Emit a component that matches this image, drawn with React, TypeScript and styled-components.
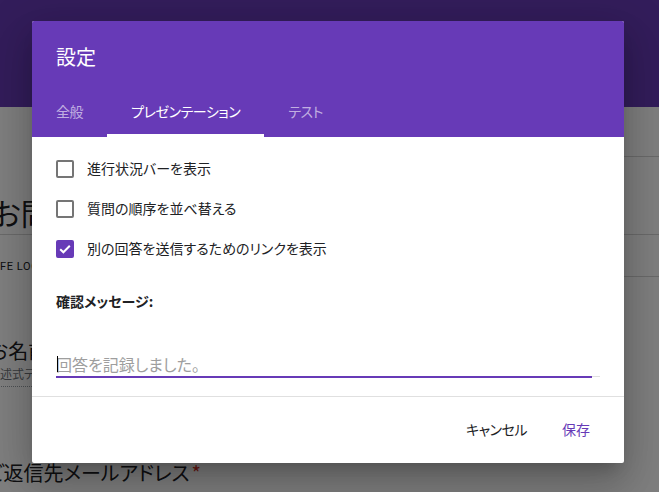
import React from "react";
import styled, { createGlobalStyle } from "styled-components";

const GlobalStyle = createGlobalStyle`
  html, body {
    margin: 0;
    padding: 0;
  }
  body {
    width: 659px;
    height: 492px;
    overflow: hidden;
    background: #ffffff;
    font-family: "Noto Sans CJK JP", "Noto Sans", sans-serif;
    font-feature-settings: "palt";
  }
`;

const Page = styled.div`
  position: relative;
  width: 659px;
  height: 492px;
  overflow: hidden;
  background: #ffffff;
`;

const TopBand = styled.div`
  height: 107px;
  background: #673ab7;
`;

const Body = styled.div`
  display: flex;
  flex-direction: column;
  color: #202124;
  white-space: nowrap;
`;

const BodyRow = styled.div`
  display: flex;
`;

// only the strip left of the dialog is ever visible
const FormCol = styled.div`
  width: 40px;
  overflow: hidden;
`;

const Spacer = styled.div`
  flex: 1;
`;

const FormTitle = styled.div`
  margin: 87px 0 0 -8px;
  padding-bottom: 4px;
  font-size: 30px;
  line-height: 36px;
  border-bottom: 1px solid #d4d4d4;
`;

const FormMeta = styled.div`
  margin-top: 24px;
  font-family: Roboto, "Liberation Sans", sans-serif;
  font-size: 11px;
  line-height: 16px;
  letter-spacing: 0.6px;
`;

const QuestionTitle = styled.div<{ $shift: number; $gap: number }>`
  margin: ${({ $gap }) => $gap}px 0 0 ${({ $shift }) => $shift}px;
  font-size: 20px;
  line-height: 28px;
`;

const Required = styled.span`
  color: #d93025;
  margin-left: 2px;
`;

const AnswerHint = styled.div`
  margin: 1px 0 0 -12px;
  padding-bottom: 4px;
  font-size: 12px;
  line-height: 16px;
  color: #70757a;
  border-bottom: 1px dotted #9aa0a6;
`;

const SideCol = styled.div`
  width: 90px;
  display: flex;
  flex-direction: column;
`;

const SideRule = styled.div<{ $gap: number }>`
  margin-top: ${({ $gap }) => $gap}px;
  height: 1px;
  background: #d4d4d4;
`;

const Overlay = styled.div`
  position: absolute;
  inset: 0;
  display: flex;
  align-items: flex-start;
  padding: 21px 0 0 32px;
  background: rgba(0, 0, 0, 0.5);
`;

const Dialog = styled.div`
  width: 592px;
  display: flex;
  flex-direction: column;
  background: #ffffff;
  border-radius: 2px;
  overflow: hidden;
  box-shadow: 0 24px 38px 3px rgba(0, 0, 0, 0.14),
    0 9px 46px 8px rgba(0, 0, 0, 0.12), 0 11px 15px -7px rgba(0, 0, 0, 0.2);
`;

const DialogHeader = styled.div`
  background: #673ab7;
`;

const DialogTitle = styled.div`
  padding: 24px 24px 20px;
  font-size: 20px;
  line-height: 24px;
  color: #ffffff;
`;

const TabBar = styled.div`
  display: flex;
  height: 48px;
`;

const Tab = styled.div<{ $active?: boolean }>`
  position: relative;
  display: flex;
  align-items: center;
  padding: 0 24px 4px;
  font-size: 14px;
  letter-spacing: -0.45px;
  color: ${({ $active }) => ($active ? "#ffffff" : "rgba(255, 255, 255, 0.6)")};

  &::after {
    content: "";
    position: absolute;
    left: 0;
    right: 0;
    bottom: 0;
    height: 3px;
    background: ${({ $active }) => ($active ? "#ffffff" : "transparent")};
  }
`;

const DialogContent = styled.div`
  padding: 12px 24px 0;
`;

const CheckRow = styled.label`
  display: flex;
  align-items: center;
  gap: 13px;
  height: 40px;
  font-size: 14px;
  color: #202124;
`;

const RowText = styled.span`
  margin-top: -2px;
`;

const Box = styled.span<{ $checked?: boolean }>`
  box-sizing: border-box;
  width: 18px;
  height: 18px;
  border-radius: 2px;
  display: flex;
  align-items: center;
  justify-content: center;
  border: 2px solid ${({ $checked }) => ($checked ? "#673ab7" : "#757575")};
  background: ${({ $checked }) => ($checked ? "#673ab7" : "transparent")};
`;

const SectionLabel = styled.div`
  margin-top: 22px;
  font-size: 14px;
  line-height: 20px;
  font-weight: 700;
  color: #202124;
`;

const InputField = styled.div`
  position: relative;
  margin-top: 41px;
  height: 24px;
  font-size: 16px;
  line-height: 24px;
  color: #9e9e9e;

  &::before {
    content: "";
    position: absolute;
    left: 0;
    right: 0;
    top: 24px;
    height: 1px;
    background: #e0e0e0;
  }

  &::after {
    content: "";
    position: absolute;
    left: 0;
    right: 8px;
    top: 24px;
    height: 2px;
    background: #673ab7;
  }
`;

const Caret = styled.span`
  position: absolute;
  left: 1px;
  top: 4px;
  width: 1px;
  height: 16px;
  background: #000000;
`;

const Footer = styled.div`
  margin-top: 20px;
  height: 67px;
  display: flex;
  align-items: center;
  justify-content: flex-end;
  gap: 3px;
  padding: 0 18px 3px 0;
  box-sizing: border-box;
  border-top: 1px solid #e0e0e0;
`;

const Button = styled.button<{ $primary?: boolean }>`
  height: 36px;
  padding: 0 16px;
  border: none;
  background: none;
  font-family: inherit;
  font-feature-settings: "palt";
  font-size: 14px;
  letter-spacing: ${({ $primary }) => ($primary ? "0" : "-0.5px")};
  color: ${({ $primary }) => ($primary ? "#673ab7" : "#202124")};
`;

const Check = () => (
  <svg width="14" height="14" viewBox="0 0 14 14">
    <path
      d="M2.2 7.2 L5.4 10.3 L11.8 3.8"
      fill="none"
      stroke="#ffffff"
      strokeWidth="2"
    />
  </svg>
);

const options = [
  { label: "進行状況バーを表示", checked: false },
  { label: "質問の順序を並べ替える", checked: false },
  { label: "別の回答を送信するためのリンクを表示", checked: true },
];

const App = () => {
  return (
    <>
      <GlobalStyle />
      <Page>
        <TopBand />
        <Body>
          <BodyRow>
            <FormCol>
              <FormTitle>お問</FormTitle>
              <FormMeta>FE LOC</FormMeta>
              <QuestionTitle $shift={-11} $gap={62}>
                お名前
              </QuestionTitle>
              <AnswerHint>記述式テ</AnswerHint>
            </FormCol>
            <Spacer />
            <SideCol>
              <SideRule $gap={49} />
              <SideRule $gap={77} />
              <SideRule $gap={41} />
            </SideCol>
          </BodyRow>
          <QuestionTitle $shift={-14} $gap={72}>
            ご返信先メールアドレス<Required>*</Required>
          </QuestionTitle>
        </Body>
        <Overlay>
          <Dialog>
            <DialogHeader>
              <DialogTitle>設定</DialogTitle>
              <TabBar>
                <Tab>全般</Tab>
                <Tab $active>プレゼンテーション</Tab>
                <Tab>テスト</Tab>
              </TabBar>
            </DialogHeader>
            <DialogContent>
              {options.map((option) => (
                <CheckRow key={option.label}>
                  <Box $checked={option.checked}>
                    {option.checked && <Check />}
                  </Box>
                  <RowText>{option.label}</RowText>
                </CheckRow>
              ))}
              <SectionLabel>確認メッセージ:</SectionLabel>
              <InputField>
                <Caret />
                回答を記録しました。
              </InputField>
            </DialogContent>
            <Footer>
              <Button>キャンセル</Button>
              <Button $primary>保存</Button>
            </Footer>
          </Dialog>
        </Overlay>
      </Page>
    </>
  );
};

export default App;
